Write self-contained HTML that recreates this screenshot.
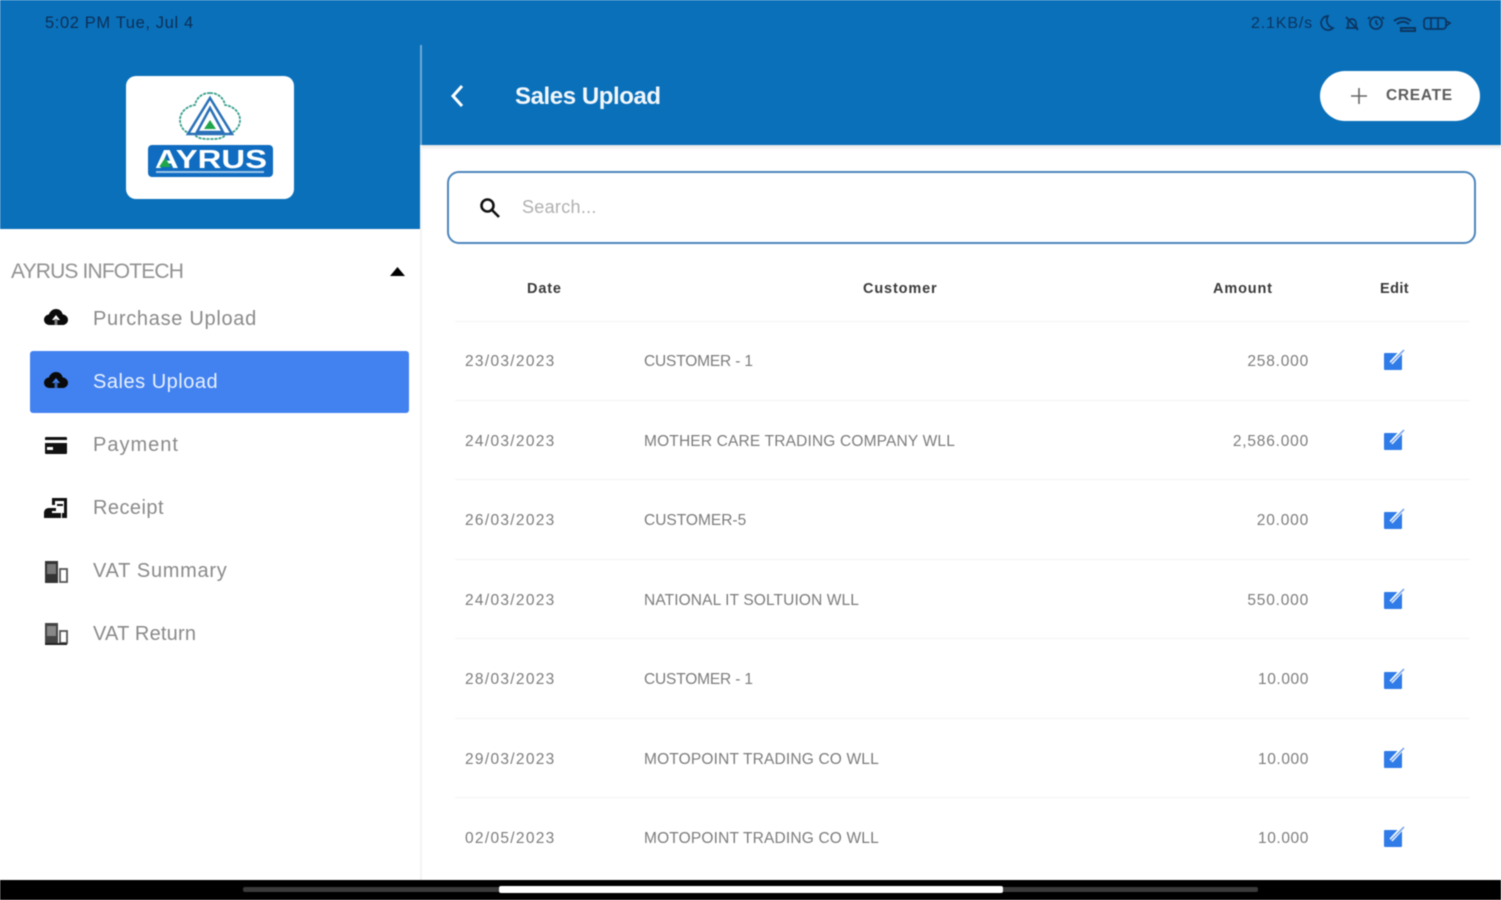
<!DOCTYPE html>
<html>
<head>
<meta charset="utf-8">
<style>
html,body{margin:0;padding:0;background:#fff;}
#p{position:relative;width:1501px;height:900px;overflow:hidden;background:#fff;font-family:"Liberation Sans",sans-serif;filter:blur(0.6px);}
.a{position:absolute;white-space:nowrap;}
.nav{left:93px;font-size:20px;line-height:24px;color:#8a8a8a;}
.d,.c,.m{font-size:15.5px;line-height:18px;color:#7c7c7c;}
.d{left:465px;letter-spacing:1.3px;}
.c{left:644px;letter-spacing:0.17px;}
.m{right:192px;text-align:right;letter-spacing:0.8px;}
.h{font-size:14.5px;font-weight:bold;color:#3a3a3a;top:280px;line-height:18px;letter-spacing:0.85px;}
.l{position:absolute;height:1px;background:#f3f3f3;left:455px;width:1015px;}
.ic{position:absolute;}
</style>
</head>
<body>
<div id="p">
  <div class="a" style="left:0;top:0;width:1501px;height:145px;background:#0a70ba;"></div>
  <div class="a" style="left:0;top:145px;width:420px;height:84px;background:#0a70ba;"></div>
  <div class="a" style="left:420px;top:45px;width:2px;height:100px;background:#6fa9d6;"></div>
  <div class="a" style="left:420px;top:145px;width:2px;height:735px;background:#f4f4f4;"></div>
  <div class="a" style="left:422px;top:145px;width:1079px;height:5px;background:linear-gradient(#e6e6e6,#fff);"></div>

  <div class="a" style="left:45px;top:14px;font-size:16.5px;line-height:19px;color:#0c2f55;letter-spacing:0.62px;">5:02 PM Tue, Jul 4</div>
  <div class="a" style="left:1251px;top:14px;font-size:16px;line-height:19px;color:#0c3560;letter-spacing:0.85px;">2.1KB/s</div>
  <svg class="ic" style="left:1316px;top:12px" width="140" height="22" viewBox="0 0 140 22" fill="none" stroke="#0c3560" stroke-width="1.7">
    <path d="M12 4a7 7 0 1 0 5 12 8 8 0 0 1-5-12z"/>
    <path d="M30 16h12M32 16v-5a4 4 0 0 1 8 0v5M30 5l12 13"/>
    <circle cx="60" cy="11" r="6"/><path d="M54 5l-2 2M66 5l2 2M60 8v3l2 2"/>
    <path d="M78 9c5-4 12-4 17 0M81 12c4-3 8-3 12 0M85 16h14v3H85z" stroke-width="2"/>
    <rect x="108" y="6" width="22" height="11" rx="3"/><path d="M115 6v11M122 6v11M130 9l4 2-4 3"/>
  </svg>

  <!-- logo -->
  <div class="a" style="left:126px;top:76px;width:168px;height:123px;background:#fff;border-radius:10px;"></div>
  <svg class="ic" style="left:126px;top:76px" width="168" height="123" viewBox="0 0 168 123">
    <path d="M84 17c9 0 14 6 15 12 8 1 15 7 15 15s-7 14-14 14c-3 5-9 5-16 5s-12 0-16-5c-8 0-14-6-14-14s7-14 15-15c1-6 6-12 15-12z" fill="none" stroke="#3a9f8d" stroke-width="1.8" stroke-dasharray="3 1"/>
    <path d="M84 22L62 58h44z" fill="none" stroke="#2a70b8" stroke-width="2.5"/>
    <path d="M84 32L71 56h26z" fill="none" stroke="#2a70b8" stroke-width="2.5"/>
    <path d="M84 44l-6 9h12z" fill="#1fa64a"/>
    <rect x="22" y="69" width="125" height="32" rx="4" fill="#0f6cc0"/>
    <text x="85" y="92" text-anchor="middle" font-family="Liberation Sans" font-weight="bold" font-size="26" fill="#fff" textLength="112" lengthAdjust="spacingAndGlyphs">AYRUS</text>
    <path d="M33 91l6-9 6 9z" fill="#1fa64a"/>
    <rect x="30" y="95" width="108" height="2" fill="#9cc5ea"/>
  </svg>

  <!-- top bar -->
  <svg class="ic" style="left:448px;top:83px" width="20" height="26" viewBox="0 0 20 26" fill="none" stroke="#fff" stroke-width="3"><path d="M14 3L5 13l9 10"/></svg>
  <div class="a" style="left:515px;top:83px;font-size:24px;line-height:28px;font-weight:bold;color:#f2f7fb;letter-spacing:-0.42px;">Sales Upload</div>
  <div class="a" style="left:1320px;top:71px;width:160px;height:50px;background:#fff;border-radius:25px;"></div>
  <svg class="ic" style="left:1350px;top:87px" width="18" height="18" viewBox="0 0 18 18" stroke="#666" stroke-width="1.6"><path d="M9 1v16M1 9h16"/></svg>
  <div class="a" style="left:1386px;top:86px;font-size:15.5px;line-height:19px;font-weight:bold;color:#5c5c5c;letter-spacing:0.7px;">CREATE</div>

  <!-- sidebar -->
  <div class="a" style="left:11px;top:259px;font-size:21px;line-height:25px;color:#929292;letter-spacing:-0.85px;">AYRUS INFOTECH</div>
  <svg class="ic" style="left:389px;top:266px" width="17" height="11" viewBox="0 0 17 11"><path d="M8.5 1L16 10H1z" fill="#000"/></svg>

  <div class="a" style="left:30px;top:351px;width:379px;height:62px;background:#4282f0;border-radius:3px;"></div>

  <div class="a nav" style="top:307px;letter-spacing:0.7px;">Purchase Upload</div>
  <div class="a nav" style="top:370px;color:#e8f0fd;letter-spacing:0.52px;">Sales Upload</div>
  <div class="a nav" style="top:433px;letter-spacing:1px;">Payment</div>
  <div class="a nav" style="top:496px;letter-spacing:0.45px;">Receipt</div>
  <div class="a nav" style="top:559px;letter-spacing:0.7px;">VAT Summary</div>
  <div class="a nav" style="top:622px;letter-spacing:0.2px;">VAT Return</div>

  <svg class="ic" style="left:44px;top:308px" width="24" height="20" viewBox="0 0 24 20"><path d="M12 1c3.500 0 6 2.300 6.600 5.200C21.300 6.500 24 8.700 24 11.700c0 3-2.500 5.300-5.500 5.300h-13C2.400 17 0 14.700 0 11.800c0-2.800 2.100-5 4.800-5.300C6.100 3.300 8.800 1 12 1z" fill="#0a0a0a"/><path d="M12 7l-4 5h8z" fill="#fff"/><rect x="10.500" y="11" width="3" height="6" fill="#777"/></svg>
  <svg class="ic" style="left:44px;top:371px" width="24" height="20" viewBox="0 0 24 20"><path d="M12 1c3.500 0 6 2.300 6.600 5.200C21.300 6.500 24 8.700 24 11.700c0 3-2.500 5.300-5.500 5.300h-13C2.400 17 0 14.700 0 11.800c0-2.800 2.100-5 4.800-5.300C6.100 3.300 8.800 1 12 1z" fill="#0a0a0a"/><path d="M12 7l-4 5h8z" fill="#4282f0"/><rect x="10.500" y="11" width="3" height="6" fill="#3560a8"/></svg>
  <svg class="ic" style="left:45px;top:437px" width="22" height="17" viewBox="0 0 22 17"><rect width="22" height="17" rx="1" fill="#111"/><rect y="3" width="22" height="3" fill="#fff"/><rect x="2" y="10" width="6" height="3" fill="#fff"/></svg>
  <svg class="ic" style="left:44px;top:497px" width="25" height="23" viewBox="0 0 25 23"><path d="M8 1h15v20h-5v-5h2V4H11v4H8z" fill="#111"/><rect x="13" y="7" width="6" height="2" fill="#111"/><path d="M0 16c0-3 2-5 5-5h7v3H8v2h9v5H0z" fill="#111"/></svg>
  <svg class="ic" style="left:44px;top:560px" width="24" height="24" viewBox="0 0 24 24"><rect x="1" y="1" width="13" height="22" fill="#333"/><rect x="3" y="4" width="9" height="10" fill="#777"/><rect x="16" y="9" width="7" height="13" fill="none" stroke="#555" stroke-width="1.800"/></svg>
  <svg class="ic" style="left:44px;top:622px" width="24" height="24" viewBox="0 0 24 24"><rect x="1" y="1" width="13" height="22" fill="#444"/><rect x="3" y="4" width="9" height="10" fill="#888"/><rect x="16" y="9" width="7" height="12" fill="none" stroke="#555" stroke-width="1.800"/><rect x="1" y="21" width="22" height="2" fill="#222"/></svg>

  <!-- search -->
  <div class="a" style="left:447px;top:171px;width:1025px;height:69px;border:2px solid #4c86bc;border-radius:12px;background:#fff;"></div>
  <svg class="ic" style="left:478px;top:196px" width="23" height="23" viewBox="0 0 23 23" fill="none" stroke="#111" stroke-width="2.600"><circle cx="9.500" cy="9.500" r="6"/><path d="M14 14l7 7"/></svg>
  <div class="a" style="left:522px;top:196px;font-size:18px;line-height:22px;color:#b0b0b0;letter-spacing:0.3px;">Search...</div>

  <!-- table header -->
  <div class="a h" style="left:527px;">Date</div>
  <div class="a h" style="left:863px;">Customer</div>
  <div class="a h" style="left:1213px;">Amount</div>
  <div class="a h" style="left:1380px;letter-spacing:0.4px;">Edit</div>

  <div class="l" style="top:321px"></div>
  <div class="l" style="top:400px"></div>
  <div class="l" style="top:479px"></div>
  <div class="l" style="top:559px"></div>
  <div class="l" style="top:638px"></div>
  <div class="l" style="top:718px"></div>
  <div class="l" style="top:797px"></div>

  <div class="a d" style="top:353px">23/03/2023</div><div class="a c" style="top:353px;letter-spacing:-0.17px">CUSTOMER - 1</div><div class="a m" style="top:353px">258.000</div>
  <div class="a d" style="top:433px">24/03/2023</div><div class="a c" style="top:433px">MOTHER CARE TRADING COMPANY WLL</div><div class="a m" style="top:433px">2,586.000</div>
  <div class="a d" style="top:512px">26/03/2023</div><div class="a c" style="top:512px;letter-spacing:0">CUSTOMER-5</div><div class="a m" style="top:512px">20.000</div>
  <div class="a d" style="top:592px">24/03/2023</div><div class="a c" style="top:592px;letter-spacing:0.12px">NATIONAL IT SOLTUION WLL</div><div class="a m" style="top:592px">550.000</div>
  <div class="a d" style="top:671px">28/03/2023</div><div class="a c" style="top:671px;letter-spacing:-0.17px">CUSTOMER - 1</div><div class="a m" style="top:671px;letter-spacing:0.6px">10.000</div>
  <div class="a d" style="top:751px">29/03/2023</div><div class="a c" style="top:751px">MOTOPOINT TRADING CO WLL</div><div class="a m" style="top:751px;letter-spacing:0.6px">10.000</div>
  <div class="a d" style="top:830px">02/05/2023</div><div class="a c" style="top:830px">MOTOPOINT TRADING CO WLL</div><div class="a m" style="top:830px;letter-spacing:0.6px">10.000</div>

  <svg width="0" height="0" style="position:absolute"><defs>
    <g id="e"><rect x="0" y="4" width="18" height="17" rx="1" fill="#2f7be8"/><path d="M7 14L19 1" stroke="#fff" stroke-width="4"/><path d="M7 14L20 1" stroke="#6d9fe8" stroke-width="1.500"/></g>
  </defs></svg>
  <svg class="ic" style="left:1384px;top:349px" width="21" height="22"><use href="#e"/></svg>
  <svg class="ic" style="left:1384px;top:429px" width="21" height="22"><use href="#e"/></svg>
  <svg class="ic" style="left:1384px;top:508px" width="21" height="22"><use href="#e"/></svg>
  <svg class="ic" style="left:1384px;top:588px" width="21" height="22"><use href="#e"/></svg>
  <svg class="ic" style="left:1384px;top:668px" width="21" height="22"><use href="#e"/></svg>
  <svg class="ic" style="left:1384px;top:747px" width="21" height="22"><use href="#e"/></svg>
  <svg class="ic" style="left:1384px;top:826px" width="21" height="22"><use href="#e"/></svg>

  <!-- nav bar -->
  <div class="a" style="left:0;top:880px;width:1501px;height:20px;background:#000;"></div>
  <div class="a" style="left:243px;top:887px;width:1015px;height:5px;background:#3a3a3a;border-radius:2px;"></div>
  <div class="a" style="left:499px;top:886px;width:504px;height:7px;background:#fff;border-radius:2px;"></div>
</div>
</body>
</html>
